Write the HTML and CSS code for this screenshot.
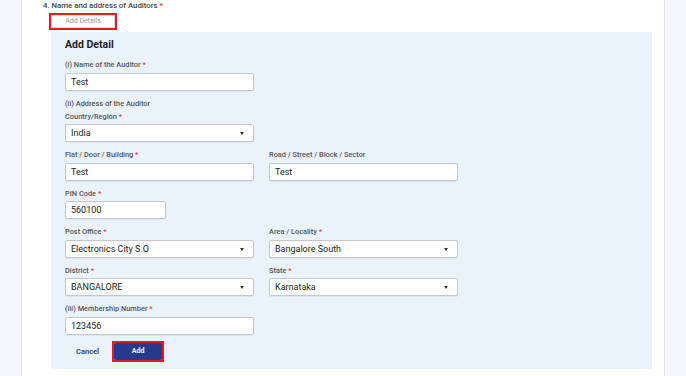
FILE: index.html
```html
<!DOCTYPE html>
<html lang="en">
<head>
  <meta charset="UTF-8">
  <meta name="viewport" content="width=device-width, initial-scale=1.0">
  <title>Auditors</title>
  <link rel="stylesheet" href="styles.css">
</head>
<body>
  <main class="sheet">
    <div class="question">4. Name and address of Auditors <span class="req">*</span></div>
    <div class="focus add-details-wrap">
      <button class="add-details">Add Details</button>
    </div>

    <section class="panel">
      <h3>Add Detail</h3>

      <div class="row">
        <div class="field">
          <label>(i) Name of the Auditor <span class="req">*</span></label>
          <div class="box">Test</div>
        </div>
      </div>

      <div class="subhead">(ii) Address of the Auditor</div>

      <div class="row">
        <div class="field">
          <label>Country/Region <span class="req">*</span></label>
          <div class="box select">India</div>
        </div>
      </div>

      <div class="row">
        <div class="field">
          <label>Flat / Door / Building <span class="req">*</span></label>
          <div class="box">Test</div>
        </div>
        <div class="field">
          <label>Road / Street / Block / Sector</label>
          <div class="box">Test</div>
        </div>
      </div>

      <div class="row">
        <div class="field short">
          <label>PIN Code <span class="req">*</span></label>
          <div class="box">560100</div>
        </div>
      </div>

      <div class="row">
        <div class="field">
          <label>Post Office <span class="req">*</span></label>
          <div class="box select">Electronics City S.O</div>
        </div>
        <div class="field">
          <label>Area / Locality <span class="req">*</span></label>
          <div class="box select">Bangalore South</div>
        </div>
      </div>

      <div class="row">
        <div class="field">
          <label>District <span class="req">*</span></label>
          <div class="box select">BANGALORE</div>
        </div>
        <div class="field">
          <label>State <span class="req">*</span></label>
          <div class="box select">Karnataka</div>
        </div>
      </div>

      <div class="row">
        <div class="field">
          <label>(iii) Membership Number <span class="req">*</span></label>
          <div class="box">123456</div>
        </div>
      </div>

      <div class="actions">
        <button class="cancel">Cancel</button>
        <div class="focus">
          <button class="add">Add</button>
        </div>
      </div>
    </section>
  </main>
</body>
</html>
```

FILE: styles.css
```css
body {
  margin: 0;
  background: #f5f6fa;
  font-family: Roboto, "Liberation Sans", sans-serif;
  color: #333;
}
.sheet {
  margin-left: 21px;
  width: 644px;
  min-height: 376px;
  box-sizing: border-box;
  background: #fff;
  border-left: 1px solid #e4e7ef;
  border-right: 1px solid #dde0ea;
  padding: 1px 0 0 21px;
}
.question {
  font-size: 7.8px;
  line-height: 10px;
  color: #444;
  font-weight: 500;
}
.req {
  color: #e53935;
}
.focus {
  display: block;
  width: fit-content;
  border: 2px solid #e21b1b;
  line-height: 0;
}
.add-details-wrap {
  margin-left: 6px;
  margin-top: 2px;
}
.add-details {
  display: block;
  width: 64px;
  height: 13px;
  padding: 0;
  border: 1px solid #dcdcdc;
  background: #fff;
  color: #9a9a9a;
  font-family: inherit;
  font-size: 7px;
  line-height: 11px;
}
.panel {
  margin: 2px 12px 0 8px;
  background: #eaf2fc;
  padding: 7px 14px 7px 14px;
}
.panel h3 {
  margin: 0 0 9px;
  font-size: 10.5px;
  line-height: 12px;
  font-weight: 700;
  color: #222;
}
.row {
  display: flex;
  gap: 15px;
  margin-bottom: 8px;
}
.field {
  width: 189px;
}
.field.short {
  width: 101px;
}
.field label,
.subhead {
  display: block;
  font-size: 7.4px;
  line-height: 10px;
  font-weight: 500;
  color: #555;
  margin-bottom: 2.5px;
}
.subhead {
  margin: 1.5px 0 3px;
}
.box {
  height: 18px;
  box-sizing: border-box;
  background: #fff;
  border: 1px solid #c4c7cd;
  border-radius: 2px;
  box-shadow: 0 1px 1px rgba(0, 0, 0, 0.06);
  padding-left: 5px;
  font-size: 9px;
  line-height: 16px;
  color: #222;
  position: relative;
}
.box.select::after {
  content: "";
  position: absolute;
  right: 9px;
  top: 7px;
  border-left: 2.5px solid transparent;
  border-right: 2.5px solid transparent;
  border-top: 3px solid #333;
}
.actions {
  display: flex;
  align-items: center;
  gap: 11px;
  margin-top: -2px;
  padding-left: 9px;
}
.cancel {
  border: none;
  background: none;
  padding: 0 2px;
  font-family: inherit;
  font-size: 7.5px;
  font-weight: 700;
  color: #3d4a86;
}
.add {
  display: block;
  width: 48px;
  height: 17px;
  padding: 0;
  border: none;
  border-radius: 1px;
  background: #283a8c;
  color: #fff;
  font-family: inherit;
  font-size: 7px;
  font-weight: 700;
}
```
